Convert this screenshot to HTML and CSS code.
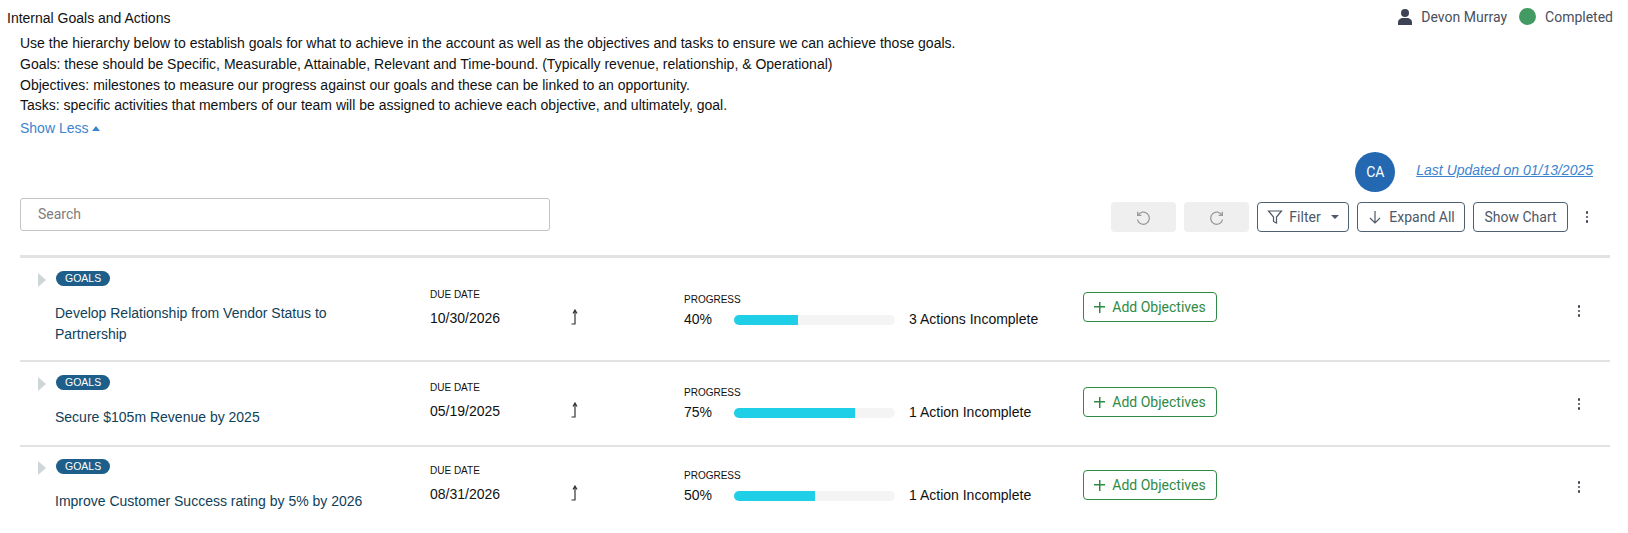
FILE: index.html
```html
<!DOCTYPE html>
<html lang="en">
<head>
  <meta charset="UTF-8">
  <title>Internal Goals and Actions</title>
  <link rel="stylesheet" href="styles.css">
</head>
<body>
  <header class="top-bar">
    <h1>Internal Goals and Actions</h1>
    <div class="owner">
      <svg class="owner-icon" viewBox="0 0 16 16" width="16" height="16"><circle cx="8" cy="4" r="4"/><path d="M1 16v-2.500C1 10.500 3.500 9 6 9h4c2.500 0 5 1.500 5 4.500V16z"/></svg>
      <span>Devon Murray</span>
      <span class="status-dot"></span>
      <span>Completed</span>
    </div>
  </header>

  <section class="intro">
    <p>Use the hierarchy below to establish goals for what to achieve in the account as well as the objectives and tasks to ensure we can achieve those goals.</p>
    <p>Goals: these should be Specific, Measurable, Attainable, Relevant and Time-bound. (Typically revenue, relationship, &amp; Operational)</p>
    <p>Objectives: milestones to measure our progress against our goals and these can be linked to an opportunity.</p>
    <p>Tasks: specific activities that members of our team will be assigned to achieve each objective, and ultimately, goal.</p>
    <a class="show-less" href="#">Show Less <span class="caret-up"></span></a>
  </section>

  <div class="updated">
    <span class="avatar">CA</span>
    <a href="#">Last Updated on 01/13/2025</a>
  </div>

  <div class="toolbar">
    <input class="search" type="text" placeholder="Search">
    <div class="actions">
      <button class="btn btn-disabled">
        <svg viewBox="0 0 16 16" width="17" height="17"><path d="M2.500 2.500v3.500H6M2.800 6A5.700 5.700 0 1 1 2.300 10"/></svg>
      </button>
      <button class="btn btn-disabled">
        <svg viewBox="0 0 16 16" width="17" height="17"><path d="M13.500 2.500v3.500H10M13.200 6A5.700 5.700 0 1 0 13.700 10"/></svg>
      </button>
      <button class="btn btn-filter">
        <svg viewBox="0 0 16 16" width="16" height="16"><path d="M1.500 2h13L9.500 8v6l-3-1.500V8z"/></svg>
        Filter
        <span class="caret-down"></span>
      </button>
      <button class="btn btn-expand">
        <svg viewBox="0 0 16 16" width="16" height="16"><path d="M8 2v12M3 9l5 5 5-5"/></svg>
        Expand All
      </button>
      <button class="btn btn-chart">Show Chart</button>
      <span class="kebab kebab-bar"><i></i><i></i><i></i></span>
    </div>
  </div>

  <div class="goals">
    <div class="goal goal-tall">
      <div class="goal-name">
        <span class="twisty"></span>
        <div>
          <span class="badge">GOALS</span>
          <a class="goal-title" href="#">Develop Relationship from Vendor Status to Partnership</a>
        </div>
      </div>
      <div class="due"><label>DUE DATE</label><span>10/30/2026</span></div>
      <svg class="priority" viewBox="0 0 10 16" width="10" height="16"><path d="M1.500 15H5V1.500M3 4.500L5 1l2 3.500"/></svg>
      <div class="progress">
        <label>PROGRESS</label>
        <div class="progress-row">
          <span class="pct">40%</span>
          <span class="track"><span class="fill" style="width: 40%"></span></span>
          <span>3 Actions Incomplete</span>
        </div>
      </div>
      <button class="add"><span class="plus"></span>Add Objectives</button>
      <span class="kebab"><i></i><i></i><i></i></span>
    </div>

    <div class="goal">
      <div class="goal-name">
        <span class="twisty"></span>
        <div>
          <span class="badge">GOALS</span>
          <a class="goal-title" href="#">Secure $105m Revenue by 2025</a>
        </div>
      </div>
      <div class="due"><label>DUE DATE</label><span>05/19/2025</span></div>
      <svg class="priority" viewBox="0 0 10 16" width="10" height="16"><path d="M1.500 15H5V1.500M3 4.500L5 1l2 3.500"/></svg>
      <div class="progress">
        <label>PROGRESS</label>
        <div class="progress-row">
          <span class="pct">75%</span>
          <span class="track"><span class="fill" style="width: 75%"></span></span>
          <span>1 Action Incomplete</span>
        </div>
      </div>
      <button class="add"><span class="plus"></span>Add Objectives</button>
      <span class="kebab"><i></i><i></i><i></i></span>
    </div>

    <div class="goal goal-last">
      <div class="goal-name">
        <span class="twisty"></span>
        <div>
          <span class="badge">GOALS</span>
          <a class="goal-title" href="#">Improve Customer Success rating by 5% by 2026</a>
        </div>
      </div>
      <div class="due"><label>DUE DATE</label><span>08/31/2026</span></div>
      <svg class="priority" viewBox="0 0 10 16" width="10" height="16"><path d="M1.500 15H5V1.500M3 4.500L5 1l2 3.500"/></svg>
      <div class="progress">
        <label>PROGRESS</label>
        <div class="progress-row">
          <span class="pct">50%</span>
          <span class="track"><span class="fill" style="width: 50%"></span></span>
          <span>1 Action Incomplete</span>
        </div>
      </div>
      <button class="add"><span class="plus"></span>Add Objectives</button>
      <span class="kebab"><i></i><i></i><i></i></span>
    </div>
  </div>
</body>
</html>
```

FILE: styles.css
```css
body {
  margin: 0;
  font-family: 'Liberation Sans', Arial, sans-serif;
  font-size: 14px;
  background-color: #fff;
  color: #111;
  overflow: hidden;
}
a {
  text-decoration: none;
}
.top-bar {
  display: flex;
  justify-content: space-between;
  align-items: center;
  height: 33px;
  padding: 0 15px 0 7px;
}
.top-bar h1 {
  margin: 3px 0 0;
  font-size: 14px;
  font-weight: normal;
}
.owner {
  display: flex;
  align-items: center;
  font-family: Roboto, sans-serif;
  color: #4a4f5c;
}
.owner-icon {
  fill: #3d4352;
  margin-right: 8px;
}
.status-dot {
  width: 17px;
  height: 17px;
  border-radius: 50%;
  background-color: #439a63;
  margin: 0 9px 0 12px;
}
.intro {
  padding-left: 20px;
}
.intro p {
  margin: 0;
  line-height: 20.750px;
}
.show-less {
  display: block;
  margin-top: 2px;
  color: #3d84cf;
  line-height: 21px;
}
.caret-up {
  display: inline-block;
  border: 4px solid transparent;
  border-top: 0;
  border-bottom: 5px solid #3d84cf;
  vertical-align: 2px;
}
.updated {
  display: flex;
  justify-content: flex-end;
  align-items: center;
  gap: 21px;
  height: 40px;
  margin-top: 13px;
  padding-right: 35px;
}
.updated a {
  color: #3d84cf;
  font-style: italic;
  text-decoration: underline;
  margin-top: -5px;
}
.avatar {
  display: flex;
  align-items: center;
  justify-content: center;
  width: 40px;
  height: 40px;
  border-radius: 50%;
  background-color: #2468b2;
  color: #fff;
  font-family: Roboto, sans-serif;
}
.toolbar {
  display: flex;
  justify-content: space-between;
  align-items: flex-start;
  margin-top: 6px;
  padding: 0 35px 0 20px;
}
.search {
  box-sizing: border-box;
  width: 530px;
  height: 33px;
  padding: 0 17px 2px;
  border: 1px solid #c4c4c4;
  border-radius: 3px;
  font-family: Roboto, sans-serif;
  font-size: 14px;
}
.search::placeholder {
  color: #7d7d7d;
}
.actions {
  display: flex;
  align-items: center;
  gap: 8px;
  margin-top: 4px;
}
.btn {
  display: flex;
  align-items: center;
  justify-content: center;
  gap: 6px;
  box-sizing: border-box;
  height: 30px;
  padding: 0;
  border: 1px solid #4e6070;
  border-radius: 4px;
  background-color: #fff;
  color: #4e5866;
  font-family: Roboto, sans-serif;
  font-size: 14px;
}
.btn svg {
  fill: none;
  stroke: #4e5866;
  stroke-width: 1.2;
}
.btn-disabled {
  width: 65px;
  border: none;
  background-color: #efefef;
}
.btn-disabled svg {
  stroke: #9a9a9a;
}
.btn-filter {
  width: 92px;
}
.btn-expand {
  width: 108px;
}
.btn-chart {
  width: 95px;
}
.caret-down {
  border: 4px solid transparent;
  border-bottom: 0;
  border-top: 4px solid #4e5866;
  margin-left: 4px;
}
.kebab {
  display: flex;
  flex-direction: column;
  align-items: center;
  gap: 2px;
  width: 12px;
}
.kebab i {
  width: 2.500px;
  height: 2.500px;
  border-radius: 50%;
  background-color: #3d4352;
}
.kebab-bar {
  margin-left: 5px;
}
.goals {
  margin: 23px 18px 0 20px;
  border-top: 3px solid #e2e2e2;
}
/* --shift moves the cells right of the name, the rows are not centred evenly */
.goal {
  --shift: 0px;
  display: grid;
  grid-template-columns: 410px 140px 110px 403px 1fr 12px;
  align-items: start;
  height: 85px;
  border-bottom: 2px solid #e2e2e2;
  box-sizing: border-box;
  padding-right: 25px;
}
.goal-tall {
  --shift: 11px;
  height: 104px;
}
.goal-last {
  --shift: -2px;
  border-bottom: 0;
}
.goal-name {
  display: flex;
  gap: 10px;
  padding: 11px 0 0 18px;
}
.goal-last .goal-name {
  padding-top: 10px;
}
.twisty {
  flex: none;
  margin-top: 4px;
  border: 7px solid transparent;
  border-left: 8px solid #cfd6d8;
  border-right: 0;
  height: 0;
}
.badge {
  display: inline-block;
  height: 15px;
  padding: 0 9px;
  border-radius: 8px;
  background-color: #1d5f8a;
  color: #fff;
  font-size: 10.500px;
  line-height: 15px;
}
.goal-title {
  display: block;
  width: 300px;
  margin: 17px 0 0 -1px;
  color: #0f4159;
  line-height: 21px;
}
.goal:not(.goal-tall) .goal-title {
  width: 340px;
}
.due {
  padding-top: calc(20px + var(--shift));
}
.due label,
.progress label {
  display: block;
  font-size: 10px;
  line-height: 12px;
}
.due span {
  display: block;
  margin-top: 9px;
  line-height: 16px;
}
.priority {
  fill: none;
  stroke: #333;
  stroke-width: 1.2;
  margin-top: calc(40px + var(--shift));
}
.progress {
  padding-top: calc(25px + var(--shift));
  margin-left: 4px;
}
.progress-row {
  display: flex;
  align-items: center;
  margin-top: 3px;
  line-height: 21px;
}
.pct {
  width: 50px;
}
.track {
  display: block;
  width: 161px;
  height: 10px;
  margin-right: 14px;
  border-radius: 5px;
  background-color: #f4f4f4;
  overflow: hidden;
}
.fill {
  display: block;
  height: 100%;
  background-color: #1fcfe8;
}
.add {
  display: flex;
  align-items: center;
  justify-content: center;
  box-sizing: border-box;
  width: 134px;
  height: 30px;
  margin-top: calc(25px + var(--shift));
  padding: 0;
  border: 1px solid #2f8a45;
  border-radius: 4px;
  background-color: #fff;
  color: #2f8a45;
  font-family: Roboto, sans-serif;
  font-size: 14px;
}
.goal-tall .add {
  margin-top: 34px;
}
.plus {
  width: 11px;
  height: 11px;
  margin-right: 7px;
  background:
    linear-gradient(#2f8a45, #2f8a45) center / 100% 1.500px no-repeat,
    linear-gradient(#2f8a45, #2f8a45) center / 1.500px 100% no-repeat;
}
.goal > .kebab {
  margin-top: calc(36px + var(--shift));
  justify-self: end;
}
```
